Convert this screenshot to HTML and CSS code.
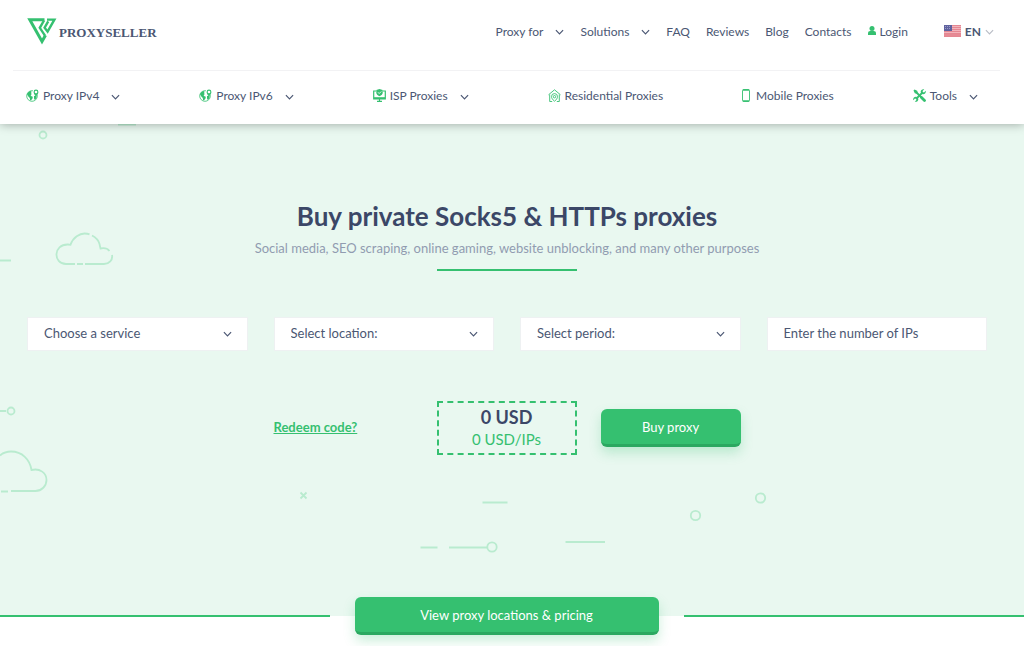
FILE: index.html
```
<!DOCTYPE html>
<html lang="en">
<head>
    <meta charset="UTF-8">
    <meta name="viewport" content="width=device-width, initial-scale=1.0">
    <title>Buy private Socks5 &amp; HTTPs proxies</title>
    <link rel="stylesheet" href="styles.css">
</head>
<body>
    <!-- shared icons -->
    <svg class="sprite" aria-hidden="true">
        <symbol id="chevron" viewBox="0 0 10 6">
            <path d="M1 1l4 4 4-4" fill="none" stroke="currentColor" stroke-width="1.3"/>
        </symbol>
        <symbol id="globe" viewBox="0 0 13 13">
            <circle cx="6" cy="7" r="5.3" fill="#fff" stroke="currentColor" stroke-width="0.8"/>
            <path d="M1 5.2c.7-1.700 2-2.800 3.800-3.200l.9 1.100-.8 1 .9.800-1.200 1.300.9 1 1.300.5-.3 1.700-1.600 2-.9-.5-.2-2-1.500-1.400zM8 7l1.500-.3 1.300.9c-.2 1.500-1 2.700-2 3.400l-.8-1.600z" fill="currentColor"/>
            <circle cx="10" cy="2.800" r="3.200" fill="#fff"/>
            <path d="M10 7.600C8.300 5.600 7.600 4.200 7.600 3a2.400 2.400 0 0 1 4.800 0c0 1.200-.7 2.600-2.400 4.600z" fill="currentColor"/>
            <circle cx="10" cy="3" r="1.300" fill="#fff"/>
        </symbol>
    </svg>

    <header class="header">
        <div class="topbar">
            <a class="logo" href="#">
                <svg width="30" height="27" viewBox="0 0 30 27" aria-hidden="true">
                    <g fill="none" stroke="currentColor">
                        <path d="M17.500 1.800H2.800L15 23.500l3.500-6.300" stroke-width="3"/>
                        <path d="M17 2.500l-4.200 7.300 5.200 7.800" stroke-width="2.400"/>
                        <path d="M20 1.600h7.400l-6.800 12-3-4 3.600-6.200" stroke-width="2.400"/>
                    </g>
                </svg>
                <span>PROXYSELLER</span>
            </a>
            <nav class="menu">
                <a href="#">Proxy for <svg class="chevron"><use href="#chevron"/></svg></a>
                <a href="#">Solutions <svg class="chevron"><use href="#chevron"/></svg></a>
                <a href="#">FAQ</a>
                <a href="#">Reviews</a>
                <a href="#">Blog</a>
                <a href="#">Contacts</a>
                <a class="login" href="#">
                    <svg width="8" height="10" viewBox="0 0 8 10" aria-hidden="true">
                        <circle cx="4" cy="2.600" r="2.500" fill="currentColor"/>
                        <path d="M0 9V7.200C0 5.800 1 5 2.200 5h3.600C7 5 8 5.800 8 7.200V9z" fill="currentColor"/>
                    </svg>
                    Login
                </a>
            </nav>
            <button class="lang" type="button">
                <svg width="17" height="12" viewBox="0 0 17 12" aria-hidden="true">
                    <rect width="17" height="12" rx="1" fill="#f3b4bb"/>
                    <path d="M0 .5h17M0 2.500h17M0 4.500h17M0 6.500h17M0 8.500h17M0 11.500h17" stroke="#e58792"/>
                    <path d="M0 10h17" stroke="#d9606f"/>
                    <rect width="8" height="6" fill="#5f629f"/>
                    <path d="M1 1.500h6M1 3.500h6" stroke="#9a9cc6" stroke-dasharray="1 1"/>
                </svg>
                EN
                <svg class="chevron"><use href="#chevron"/></svg>
            </button>
        </div>

        <nav class="products">
            <a href="#"><svg class="icon" width="13" height="13"><use href="#globe"/></svg>Proxy IPv4 <svg class="chevron"><use href="#chevron"/></svg></a>
            <a href="#"><svg class="icon" width="13" height="13"><use href="#globe"/></svg>Proxy IPv6 <svg class="chevron"><use href="#chevron"/></svg></a>
            <a href="#">
                <svg class="icon" width="13" height="13" viewBox="0 0 13 13">
                    <path d="M3 2H.7v8h11.600V2H10M4 12.300h5M6.500 10v2" fill="none" stroke="currentColor" stroke-width="1.200"/>
                    <path d="M1 8.200h11V10H1z" fill="currentColor"/>
                    <path d="M6.500 0l3.200 1v2.500c0 1.700-1.200 2.800-3.200 3.700-2-.9-3.200-2-3.200-3.700V1z" fill="currentColor"/>
                    <path d="M5 3.300l1.200 1.200L8.200 2.500" fill="none" stroke="#fff" stroke-width="0.900"/>
                </svg>ISP Proxies <svg class="chevron"><use href="#chevron"/></svg>
            </a>
            <a href="#">
                <svg class="icon" width="13" height="13" viewBox="0 0 13 13">
                    <g fill="none" stroke="currentColor" stroke-width="0.900">
                        <path d="M.5 5.800l6-5 6 5M1.700 5.500v7h2.500M11.300 5.500v7H8.800"/>
                        <path d="M6.500 12.300C4.300 10.300 3.500 9 3.500 7.600a3 3 0 0 1 6 0c0 1.400-.8 2.700-3 4.700z"/>
                        <circle cx="6.500" cy="7.700" r="1.200"/>
                    </g>
                </svg>Residential Proxies
            </a>
            <a href="#">
                <svg class="icon icon-phone" width="8" height="13" viewBox="0 0 8 13">
                    <rect x=".5" y=".5" width="7" height="12" rx="1" fill="none" stroke="currentColor" stroke-width="0.900"/>
                    <path d="M1 1h6M1 12h6" stroke="currentColor" stroke-width="1.300"/>
                </svg>Mobile Proxies
            </a>
            <a href="#">
                <svg class="icon" width="13" height="13" viewBox="0 0 13 13">
                    <path d="M3.500 3.500l6 6" stroke="currentColor" stroke-width="1.800"/>
                    <path d="M8.500 8.500l3 3" stroke="currentColor" stroke-width="2.800" stroke-linecap="round"/>
                    <path d="M9.500 3.500l-6 6" stroke="currentColor" stroke-width="1.800"/>
                    <path d="M.5 1.500l1-1 2.700 1.300.5 1.700-1.200 1.200-1.700-.5zM11.300.3L9.600 2l.3 1.100 1.100.3 1.700-1.700c.6 1.900-.8 3.900-3 3.600L7.700 3.300C7.400 1.100 9.400-.3 11.300.3zM1.700 12.700L3.400 11l-.3-1.100L2 9.600.3 11.300c-.6-1.900.8-3.900 3-3.600l2 2c.3 2.200-1.700 3.600-3.600 3z" fill="currentColor"/>
                </svg>Tools <svg class="chevron"><use href="#chevron"/></svg>
            </a>
        </nav>
    </header>

    <main>
        <section class="hero">
            <svg class="hero-art" width="1024" height="492" viewBox="0 0 1024 492" aria-hidden="true">
                <g fill="none" stroke="#b9ebcf" stroke-width="1.800">
                    <path d="M118 0.500h18M0 136.500h11M0 287h6"/>
                    <circle cx="43" cy="11" r="3.500"/>
                    <circle cx="11" cy="287" r="3.500"/>
                    <!-- clouds -->
                    <path d="M75 140H66c-13 0-13-20 2-19.500l2.500.3C73 113 80 109.500 84.500 109.500q3 0 5 .8M92 111.500q6 3 7.500 8.500l1 4.500q6-1.200 9 2.500M112 131c1 5-3 9-8 9H85M83 140h-6"/>
                    <path d="M0 331.500C4 328 8 327.500 11 327.500c11 0 19 8 20.500 18.500C40 344 46.500 349 46.500 356c0 6-5 11-11 11H11M8 367.500H1"/>
                    <path d="M300.500 368.500l6 6M306.500 368.500l-6 6M482.500 378.500h25M420.500 423.500h17M449 423.500h38M565.500 418h39.500"/>
                    <circle cx="492" cy="423" r="4.700"/>
                    <circle cx="695.500" cy="391.500" r="4.700"/>
                    <circle cx="760.500" cy="374" r="4.700"/>
                </g>
            </svg>

            <div class="hero-content">
                <h1>Buy private Socks5 &amp; HTTPs proxies</h1>
                <p class="subtitle">Social media, SEO scraping, online gaming, website unblocking, and many other purposes</p>

                <form class="order">
                    <div class="field">
                        <select aria-label="Service"><option>Choose a service</option></select>
                        <svg class="chevron"><use href="#chevron"/></svg>
                    </div>
                    <div class="field">
                        <select aria-label="Location"><option>Select location:</option></select>
                        <svg class="chevron"><use href="#chevron"/></svg>
                    </div>
                    <div class="field">
                        <select aria-label="Period"><option>Select period:</option></select>
                        <svg class="chevron"><use href="#chevron"/></svg>
                    </div>
                    <div class="field">
                        <input type="text" aria-label="Number of IPs" placeholder="Enter the number of IPs">
                    </div>

                    <div class="checkout">
                        <a class="redeem" href="#">Redeem code?</a>
                        <div class="price">
                            <strong>0 USD</strong>
                            <span>0 USD/IPs</span>
                        </div>
                        <button class="btn btn-buy" type="button">Buy proxy</button>
                    </div>
                </form>
            </div>
        </section>

        <div class="pricing">
            <span class="line"></span>
            <button class="btn" type="button">View proxy locations &amp; pricing</button>
            <span class="line"></span>
        </div>
    </main>
</body>
</html>
```
FILE: styles.css
```
:root {
    --green: #35c070;
    --green-dark: #2ba860;
    --text: #4b5773;
    --heading: #3b4767;
    --gutter: 11px;
}
* {
    box-sizing: border-box;
}
body {
    margin: 0;
    font-family: Lato, sans-serif;
    font-size: 12px;
    color: var(--text);
    background: #fff;
}
a {
    color: inherit;
    text-decoration: none;
}
button,
select,
input {
    font: inherit;
    color: inherit;
}
.sprite {
    position: absolute;
    width: 0;
    height: 0;
}
.chevron {
    width: 9px;
    height: 6px;
    flex-shrink: 0;
}

/* header */
.header {
    position: relative;
    z-index: 1;
    padding: 0 24px 0 13px;
    background: #fff;
    box-shadow: 0 0 10px rgba(0, 0, 0, 0.35);
}
.topbar {
    display: flex;
    align-items: center;
    height: 71px;
    padding: 0 6px 8px 14px;
    border-bottom: 1px solid #f2f2f4;
}
.logo {
    display: flex;
    align-items: center;
    gap: 2px;
    margin-right: auto;
    font-family: "Liberation Serif", serif;
    font-size: 13px;
    font-weight: bold;
}
.logo svg {
    color: var(--green);
}
.logo span {
    padding-top: 4px;
}
.menu {
    display: flex;
    align-items: center;
    gap: 16px;
}
.menu a,
.products a {
    display: flex;
    align-items: center;
    white-space: nowrap;
}
.menu .chevron,
.products .chevron {
    margin: 2px 0 0 12px;
}
.menu .login {
    gap: 4px;
}
.login svg {
    color: var(--green);
}
.lang {
    display: flex;
    align-items: center;
    gap: 4px;
    margin-left: 36px;
    padding: 0;
    border: 0;
    background: none;
    font-weight: bold;
}
.lang .chevron {
    margin-top: 2px;
    color: #b9bdc6;
}
.products {
    display: flex;
    align-items: center;
    justify-content: space-between;
    height: 53px;
    padding: 0 22px 4px 13px;
}
.products .icon {
    margin-right: 4px;
    color: var(--green);
}
.products .icon-phone {
    margin-right: 6px;
}

/* hero */
.hero {
    position: relative;
    padding: 75px 37px 161px 27px;
    background: #e9f8f0;
}
.hero-art {
    position: absolute;
    top: 0;
    left: 0;
}
.hero-content {
    position: relative;
}
h1 {
    margin: 0;
    font-size: 26px;
    line-height: 34px;
    font-weight: bold;
    color: var(--heading);
    text-align: center;
}
.subtitle {
    margin: 5px 0 0;
    font-size: 13px;
    line-height: 20px;
    color: #919cb0;
    text-align: center;
}
.subtitle::after {
    content: "";
    display: block;
    width: 140px;
    height: 2px;
    margin: 11px auto 0;
    background: var(--green);
}
.order {
    display: grid;
    grid-template-columns: repeat(4, 1fr);
    gap: 50px 26px;
    margin-top: 46px;
}
.field {
    position: relative;
}
.field select,
.field input {
    display: block;
    width: 100%;
    height: 34px;
    padding: 0 16px 2px;
    border: 1px solid #eef1f2;
    border-radius: 0;
    background: #fff;
    font-size: 13px;
    appearance: none;
}
.field input::placeholder {
    color: var(--text);
    opacity: 1;
}
.field .chevron {
    position: absolute;
    top: 14px;
    right: 16px;
    pointer-events: none;
}
.checkout {
    grid-column: 2 / 4;
    display: flex;
    align-items: center;
    gap: 24px;
}
.redeem {
    margin-right: auto;
    padding-bottom: 2px;
    font-size: 13px;
    font-weight: bold;
    color: var(--green);
    text-decoration: underline;
}
.price {
    width: 140px;
    height: 54px;
    padding-top: 3px;
    border: 2px dashed var(--green);
    text-align: center;
}
.price strong,
.price span {
    display: block;
    line-height: 22px;
}
.price strong {
    font-size: 18px;
    color: var(--heading);
}
.price span {
    font-size: 15px;
    color: var(--green);
}
.btn {
    height: 38px;
    padding: 0;
    border: 0;
    border-bottom: 3px solid var(--green-dark);
    border-radius: 6px;
    background: var(--green);
    box-shadow: 0 6px 12px rgba(53, 192, 112, 0.25);
    color: #fff;
    font-size: 13px;
}
.btn-buy {
    width: 140px;
}

/* pricing */
.pricing {
    position: relative;
    display: grid;
    grid-template-columns: 1fr 304px 1fr;
    align-items: center;
    column-gap: 25px;
    margin-top: -19px;
    padding: 0 var(--gutter) 11px 0;
}
.line {
    height: 2px;
    background: var(--green);
}
.line:last-child {
    margin-right: calc(-1 * var(--gutter));
}
```
